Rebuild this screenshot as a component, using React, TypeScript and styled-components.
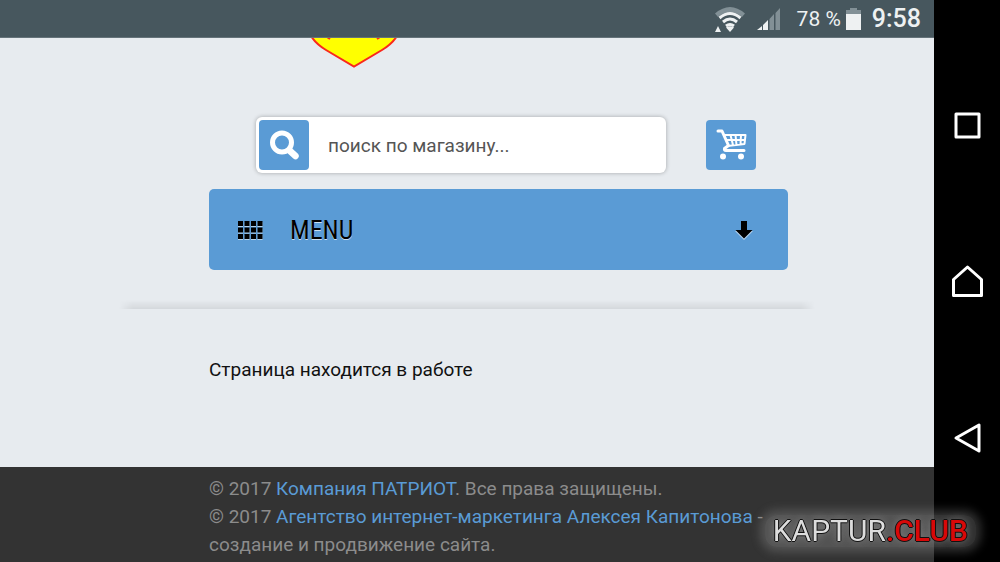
import React from "react";
import styled, { createGlobalStyle } from "styled-components";

const GlobalStyle = createGlobalStyle`
  * { box-sizing: border-box; }
  body {
    margin: 0;
    background: #e7ebef;
    font-family: Roboto, "Liberation Sans", sans-serif;
  }
`;

const Screen = styled.div`
  display: flex;
  height: 100vh;
  overflow: hidden;
  background: #000;
`;

const Viewport = styled.div`
  flex: 1;
  min-width: 0;
  display: flex;
  flex-direction: column;
  background: #e7ebef;
`;

const StatusBar = styled.header`
  flex: none;
  display: flex;
  align-items: center;
  justify-content: flex-end;
  height: 38px;
  padding: 0 13px 0 0;
  background: #47575e;
  border-bottom: 1px solid #65737a;
  color: #eef1f2;
`;

const StatusIcon = styled.svg<{ $gap: number }>`
  display: block;
  margin-right: ${(p) => p.$gap}px;
`;

const BatteryLevel = styled.span`
  margin-right: 5px;
  font-size: 21px;
`;

const Clock = styled.time`
  font-size: 25px;
  font-weight: 500;
`;

const Page = styled.main`
  flex: 1;
  width: 696px;
  max-width: 100%;
  margin: 0 auto;
`;

const Content = styled.div`
  padding: 0 27px 0 90px;
`;

const Logo = styled.svg`
  display: block;
  margin-left: 101px;
`;

const ShopBar = styled.div`
  display: flex;
  align-items: center;
  gap: 40px;
  padding: 49px 32px 16px 47px;
`;

const SearchForm = styled.form`
  flex: 1;
  min-width: 0;
  display: flex;
  align-items: center;
  height: 56px;
  padding: 3px;
  border-radius: 6px;
  background: #fff;
  box-shadow: 0 0 4px rgba(0, 0, 0, 0.3);
`;

const IconButton = styled.button`
  flex: none;
  display: flex;
  align-items: center;
  justify-content: center;
  width: 50px;
  height: 50px;
  padding: 0;
  border: 0;
  border-radius: 4px;
  background: #5a9bd5;
  color: #fff;
`;

const SearchInput = styled.input`
  flex: 1;
  min-width: 0;
  height: 50px;
  padding: 0 19px;
  border: 0;
  outline: 0;
  background: transparent;
  font: 19px Roboto, sans-serif;
  color: #555;
  &::placeholder { color: #555; opacity: 1; }
`;

const MenuButton = styled.button`
  display: flex;
  align-items: center;
  width: 100%;
  height: 81px;
  padding: 0 35px 0 28px;
  border: 0;
  border-radius: 5px;
  background: #5a9bd5;
  color: #000;
`;

const MenuLabel = styled.span`
  flex: 1;
  padding-left: 27px;
  text-align: left;
  font: 26px "Liberation Sans Narrow", "Roboto Condensed", "Liberation Sans", sans-serif;
  text-shadow: 0 1px 0 rgba(255, 255, 255, 0.7);
`;

const Divider = styled.hr`
  height: 9px;
  margin: 30px 0 0;
  border: 0;
  background: linear-gradient(to bottom, rgba(0, 0, 0, 0), rgba(0, 0, 0, 0.08));
  mask-image: linear-gradient(to right, transparent, #000 2%, #000 98%, transparent);
`;

const Notice = styled.p`
  margin: 47px 0 0;
  font-size: 19px;
  line-height: 28px;
  color: #111;
`;

const Footer = styled.footer`
  flex: none;
  height: 95px;
  padding: 8px 0 0;
  background: #333;
  color: #8c8c8c;
  font-size: 19px;
  line-height: 28px;
`;

const FooterInner = styled.div`
  width: 696px;
  max-width: 100%;
  margin: 0 auto;
  padding: 0 27px 0 90px;
`;

const FooterText = styled.p`
  margin: 0;
`;

const FooterLink = styled.a`
  color: #5a9bd5;
  text-decoration: none;
`;

const NavBar = styled.nav`
  flex: none;
  display: flex;
  flex-direction: column;
  width: 66px;
  padding: 47px 0;
  background: #000;
`;

const NavButton = styled.button`
  flex: 1;
  display: flex;
  align-items: center;
  justify-content: center;
  padding: 0;
  border: 0;
  background: transparent;
  color: #fff;
`;

const Watermark = styled.div`
  position: fixed;
  right: 24px;
  bottom: 15px;
  padding: 0 8px;
  border-radius: 12px;
  background: rgba(160, 160, 160, 0.3);
  box-shadow: 0 0 10px 5px rgba(160, 160, 160, 0.3);
  font-size: 30px;
  line-height: 32px;
  color: #ddd;
  text-shadow: 1px 0 #111, -1px 0 #111, 0 1px #111, 0 -1px #111, 0 0 8px #999;
`;

const WatermarkAccent = styled.span`
  font-weight: 500;
  color: #d80808;
`;

const navIcons = [
  { label: "Недавние", path: "M5 5H28V28H5Z" },
  { label: "Домой", path: "M2.500 14.500 16.500 2 30.500 14.500V30.500H2.500Z" },
  { label: "Назад", path: "M28 4V30L5 17Z" },
];

export default function App() {
  return (
    <>
      <GlobalStyle />
      <Screen>
        <Viewport>
          <StatusBar>
            <StatusIcon $gap={11} width="32" height="28" viewBox="0 0 32 28" aria-label="Wi-Fi">
              <path d="M1 8.500Q16-4.500 31 8.500L28 12Q16 2 4 12Z" fill="#829096" />
              <path
                d="M5.500 13Q16 4 26.500 13M9 17Q16 11 23 17M12 21Q16 18 20 21"
                fill="none"
                stroke="#eef1f2"
                strokeWidth="3"
              />
              <path d="M12 22.500Q16 20 20 22.500L16 27ZM1 27 4 21 7 27Z" fill="#eef1f2" />
            </StatusIcon>
            <StatusIcon $gap={16} width="24" height="24" viewBox="0 0 24 24" aria-label="Сигнал">
              <path d="M0 23 5 19V23ZM6 18 11 13V23H6Z" fill="#eef1f2" />
              <path d="M12.500 12 17 7V23H12.500ZM18.500 6 23 1V23H18.500Z" fill="#829096" />
            </StatusIcon>
            <BatteryLevel>78 %</BatteryLevel>
            <StatusIcon $gap={11} width="15" height="24" viewBox="0 0 15 24" aria-label="Батарея">
              <path d="M0 3H4V1H11V3H15V8H0Z" fill="#829096" />
              <path d="M0 7H15V23H0Z" fill="#eef1f2" />
            </StatusIcon>
            <Clock>9:58</Clock>
          </StatusBar>

          <Page>
            <Content>
              <Logo width="88" height="30" viewBox="0 0 88 30" aria-label="Патриот">
                <path
                  d="M1-2Q6 6 16 12L44 28.500 72 12Q82 6 87-2Z"
                  fill="#ff0"
                  stroke="#f9281c"
                  strokeWidth="2"
                />
                <path d="M17-1 20 1M70-1 67 1" stroke="#f9281c" strokeWidth="2" />
              </Logo>
              <ShopBar>
                <SearchForm onSubmit={(e) => e.preventDefault()}>
                  <IconButton type="submit" aria-label="Найти">
                    <svg width="32" height="32" viewBox="0 0 32 32" fill="none" stroke="currentColor">
                      <circle cx="14" cy="13.500" r="9.500" strokeWidth="5" />
                      <path d="M21.500 21.500 27.500 27" strokeWidth="6.500" strokeLinecap="round" />
                    </svg>
                  </IconButton>
                  <SearchInput type="text" aria-label="Поиск" placeholder="поиск по магазину..." />
                </SearchForm>
                <IconButton type="button" aria-label="Корзина">
                  <svg width="32" height="32" viewBox="0 0 32 32" fill="none" stroke="currentColor">
                    <path
                      d="M3 2H7L13.500 16.500 9.500 19.500Q9 21.500 11 21.500H29"
                      strokeWidth="3"
                      strokeLinecap="round"
                      strokeLinejoin="round"
                    />
                    <path
                      d="M8.500 6H30.500L29.500 15 12.500 17M11 11H29.500M15.500 6 18 16M20.500 6 21.500 16M26 6 25.500 15"
                      strokeWidth="2"
                      strokeLinejoin="round"
                    />
                    <circle cx="8" cy="27.500" r="3" fill="currentColor" stroke="none" />
                    <circle cx="26" cy="27.500" r="3" fill="currentColor" stroke="none" />
                  </svg>
                </IconButton>
              </ShopBar>
              <MenuButton type="button">
                <svg width="26" height="20" viewBox="0 0 26 20">
                  {[0, 1, 2].map((row) =>
                    [0, 1, 2, 3].map((col) => (
                      <g key={`${row}-${col}`}>
                        <rect x={1 + col * 6.5} y={2 + row * 6.5} width="5" height="5" fill="#b5d2ec" />
                        <rect x={1 + col * 6.5} y={1 + row * 6.5} width="5" height="5" />
                      </g>
                    ))
                  )}
                </svg>
                <MenuLabel>MENU</MenuLabel>
                <svg width="18" height="20" viewBox="0 0 18 20">
                  <path d="M6 2H12V11H18L9 20 0 11H6Z" fill="#b5d2ec" />
                  <path d="M6 1H12V10H17.500L9 18.500 .5 10H6Z" />
                </svg>
              </MenuButton>
            </Content>
            <Divider />
            <Content>
              <Notice>Страница находится в работе</Notice>
            </Content>
          </Page>

          <Footer>
            <FooterInner>
              <FooterText>
                © 2017 <FooterLink href="#company">Компания ПАТРИОТ</FooterLink>. Все права защищены.
              </FooterText>
              <FooterText>
                © 2017 <FooterLink href="#agency">Агентство интернет-маркетинга Алексея Капитонова</FooterLink> -
                <br />
                создание и продвижение сайта.
              </FooterText>
            </FooterInner>
          </Footer>
        </Viewport>

        <NavBar>
          {navIcons.map((icon) => (
            <NavButton key={icon.label} type="button" aria-label={icon.label}>
              <svg width="33" height="33" viewBox="0 0 33 33">
                <path
                  d={icon.path}
                  fill="none"
                  stroke="currentColor"
                  strokeWidth="3"
                  strokeLinejoin="round"
                />
              </svg>
            </NavButton>
          ))}
        </NavBar>
      </Screen>
      <Watermark>
        KAPTUR<WatermarkAccent>.CLUB</WatermarkAccent>
      </Watermark>
    </>
  );
}
